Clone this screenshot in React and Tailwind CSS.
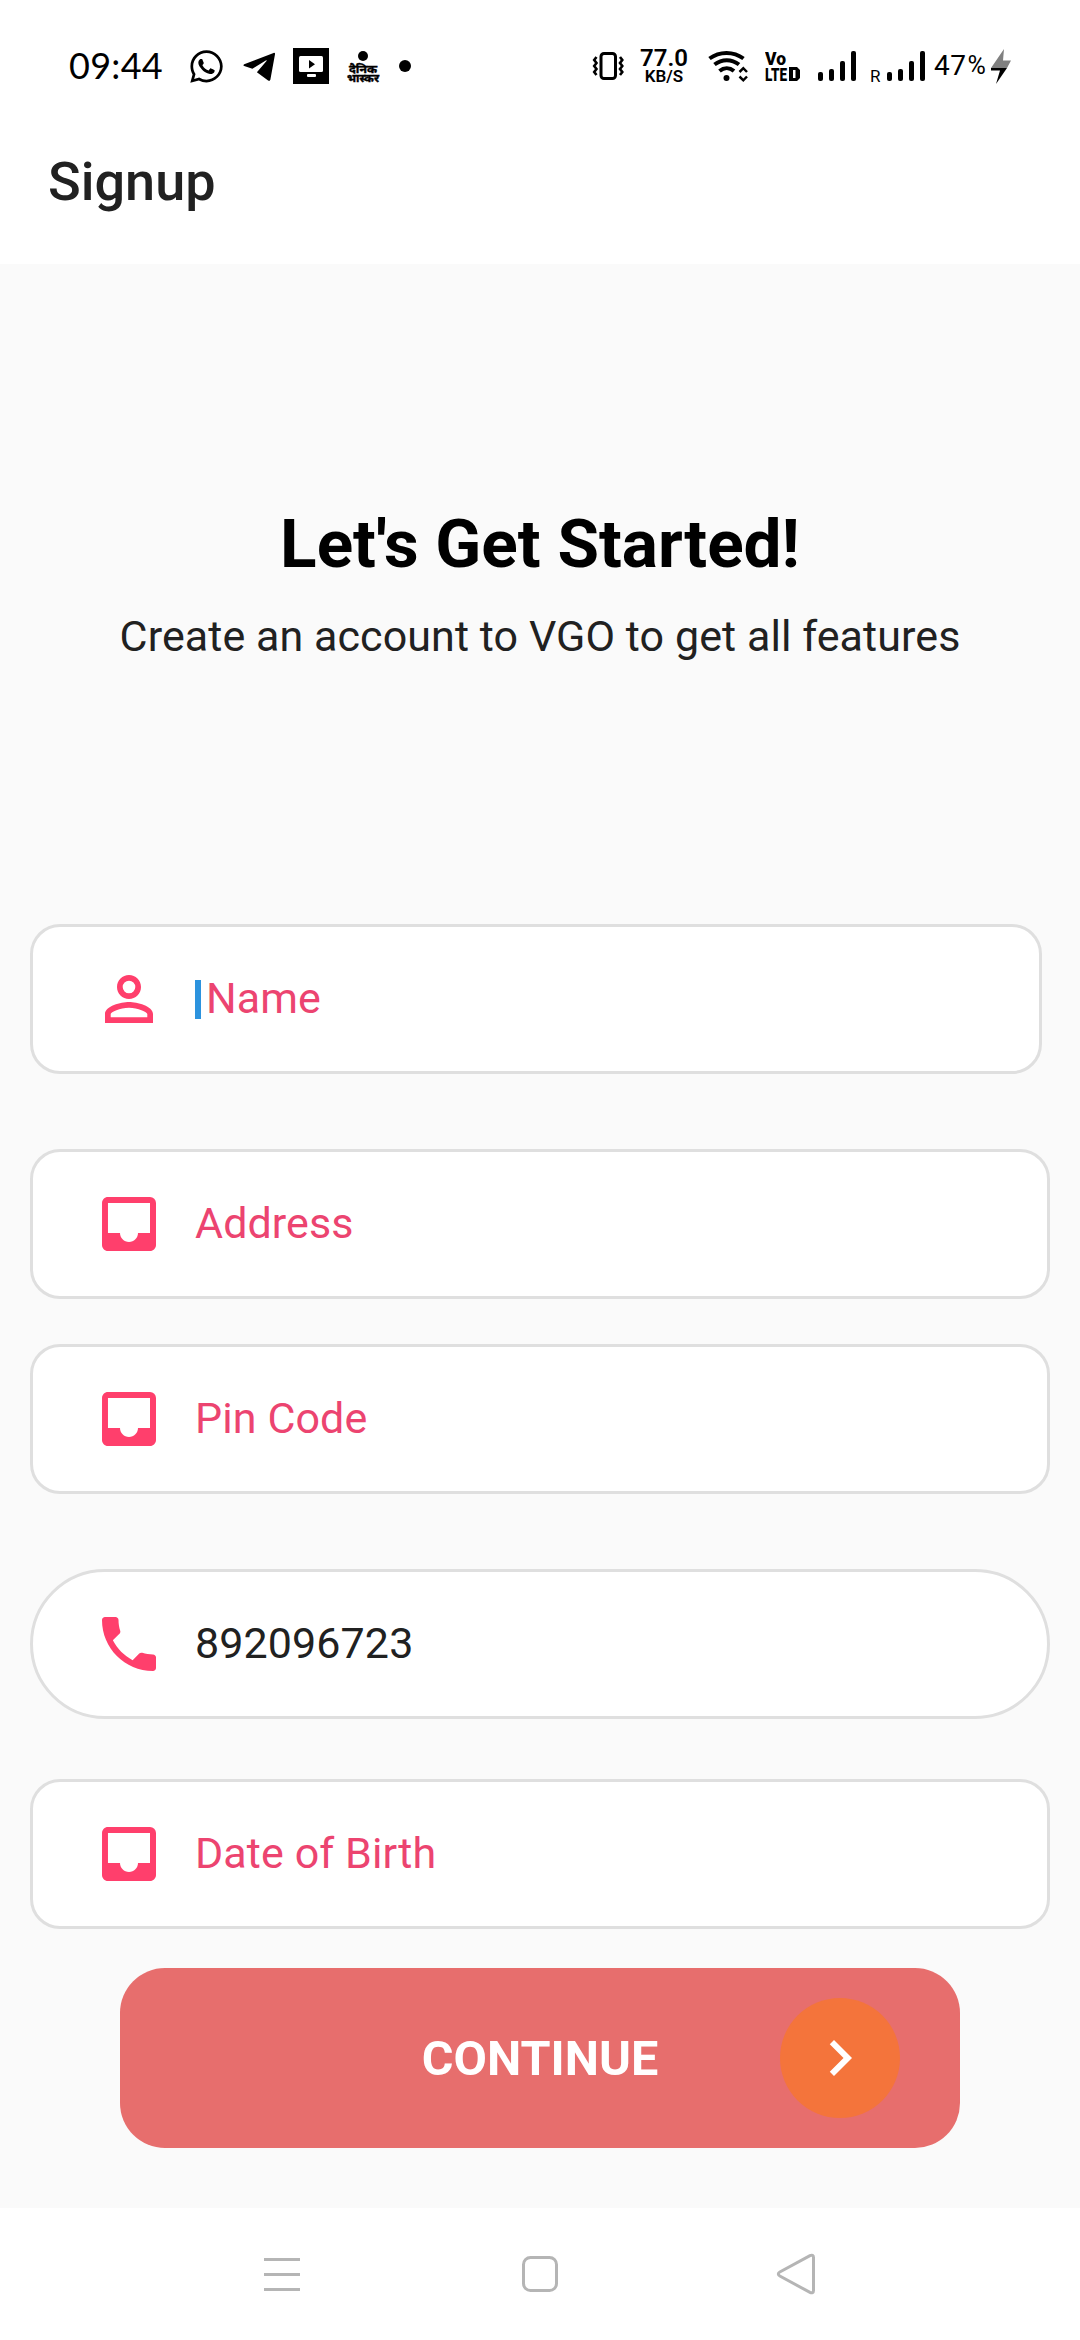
import React, { useState } from 'react';
import { FaWhatsapp } from 'react-icons/fa';
import { MdChevronRight, MdInbox, MdPersonOutline, MdPhone } from 'react-icons/md';

const SignalBars = ({ className }) => (
  <svg className={className} width="38" height="40" viewBox="0 0 38 40">
    <rect x="0" y="26" width="5" height="9" rx="2" />
    <rect x="11" y="23" width="5" height="12" rx="2" />
    <rect x="22" y="15" width="5" height="20" rx="2" />
    <rect x="33" y="5" width="5" height="30" rx="2" />
  </svg>
);

const StatusBar = () => (
  <div className="flex h-[132px] items-center pl-[69px] text-black">
    <span className="mb-[2px] w-[121px] font-[Lato,sans-serif] text-[36px] leading-10 tracking-[0.3px]">09:44</span>
    <FaWhatsapp className="h-[37px] w-[33px]" />

    {/* Telegram */}
    <svg className="ml-5" width="32" height="40" viewBox="0 0 32 40">
      <path d="M1.2 18.3 30.6 6.9c1-.4 1.7.2 1.4 1.4l-4.6 25.2c-.3 1.4-1.2 1.7-2.3.9l-11.2-8.1 9.6-11.3c.4-.6-.1-.9-.7-.5L9.4 22.7 1.2 20.1c-1-.4-1-1.3 0-1.8z" />
    </svg>

    {/* Video app */}
    <svg className="ml-[18px]" width="36" height="36" viewBox="0 0 36 36">
      <rect width="36" height="36" />
      <rect x="6" y="8" width="24" height="16" rx="1.5" fill="#fff" />
      <path d="M16 12v8.5l6-4.25z" />
      <rect x="14" y="26" width="9" height="3" rx="1" fill="#fff" />
    </svg>

    {/* News app */}
    <svg className="ml-[17px]" width="34" height="40" viewBox="0 0 34 40" fontSize="10.5" fontWeight="700" fontFamily="Noto Sans, sans-serif">
      <circle cx="17" cy="10" r="5" />
      <g stroke="#000" strokeWidth="0.4">
        <text x="3" y="26.5" textLength="28" lengthAdjust="spacingAndGlyphs">दैनिक</text>
        <text x="1" y="36" textLength="32" lengthAdjust="spacingAndGlyphs">भास्कर</text>
      </g>
    </svg>
    <span className="ml-[19px] size-3 rounded-full bg-black" />

    {/* Vibrate */}
    <svg className="ml-[181px]" width="32" height="40" viewBox="0 0 32 40" fill="none" stroke="#000">
      <rect x="9" y="7.5" width="14.5" height="25" rx="3" strokeWidth="3" />
      <path d="M4.5 11 2.2 14l2.3 3-2.3 3 2.3 3-2.3 3 2.3 3M28 11l2.3 3-2.3 3 2.3 3-2.3 3 2.3 3-2.3 3" strokeWidth="2.6" />
    </svg>

    <div className="ml-4 flex w-[48px] flex-col items-center font-semibold">
      <span className="text-[24px] leading-[20px]">77.0</span>
      <span className="text-[17px] leading-[16px]">KB/S</span>
    </div>

    {/* Wifi */}
    <svg className="ml-[20px]" width="40" height="40" viewBox="0 0 40 40" fill="none" stroke="#000">
      <path d="M1.5 12.5c10-7.5 24-7.5 34 0" strokeWidth="4" />
      <path d="M6.5 18.5c7.5-5.8 17-5.8 24.5 0" strokeWidth="4" />
      <path d="M11.5 25c4.5-3.8 10-3.8 14.5 0" strokeWidth="4" />
      <circle cx="18.5" cy="32" r="3" fill="#000" stroke="none" />
      <path d="M31.5 26l3.8-3.8L39 26M31.5 30.5l3.8 3.8L39 30.5" strokeWidth="2.5" />
    </svg>

    {/* VoLTE */}
    <svg className="ml-[17px]" width="35" height="40" viewBox="0 0 35 40" fontFamily="Roboto, sans-serif" fontWeight="900">
      <text x="0" y="19" fontSize="18.5" textLength="21" lengthAdjust="spacingAndGlyphs">Vo</text>
      <text x="0" y="35" fontSize="19" textLength="22" lengthAdjust="spacingAndGlyphs">LTE</text>
      <path d="M24 21h8l3 3v8l-3 3h-8zM28 24v8h2.5v-8z" fillRule="evenodd" />
    </svg>

    <SignalBars className="ml-[18px]" />
    <span className="ml-[14px] mt-[19px] w-[17px] text-[17px] leading-5">R</span>
    <SignalBars />
    <span className="ml-[9px] text-[28px] leading-10 tracking-[0.5px]">47</span>
    <span className="ml-[1px] text-[25px] leading-10">%</span>

    {/* Charging bolt */}
    <svg className="ml-[5px]" width="20" height="40" viewBox="0 0 20 40">
      <path d="M13 3 0 22h16l4-7.5h-8z" fill="#808080" />
      <path d="M0 22h16L5 38l4-13.5H0z" />
    </svg>
  </div>
);

const Field = ({ icon: Icon, label, value, focused, className }) => (
  <label className={`flex h-[150px] items-center border-[3px] border-[#dfdfdf] bg-white pl-[60px] ${className}`}>
    <Icon className="size-[72px] text-[#ff3f6c]" />
    <span className="ml-[30px] flex items-center text-[43px] leading-[50px] tracking-[0.1px]">
      {focused && <span className="mr-[5px] h-[39px] w-[6px] bg-[#2c93de]" />}
      <span className={value ? 'pb-[2px] text-[#212121]' : 'pb-[2px] text-[#ec4470]'}>{value || label}</span>
    </span>
  </label>
);

const App = () => {
  const [phone] = useState('892096723');

  return (
    <div className="flex h-[2340px] w-[1080px] flex-col overflow-hidden bg-white font-[Roboto,sans-serif]">
      <StatusBar />
      <header className="h-[132px] pl-12 pt-[18px]">
        <h1 className="text-[54px] font-medium leading-[64px] text-[#212121]">Signup</h1>
      </header>

      <main className="h-[1944px] bg-[#fafafa]">
        <div className="flex h-[660px] flex-col items-center pt-[241px]">
          <h2 className="text-[67.5px] font-bold leading-[78px] text-black">Let's Get Started!</h2>
          <p className="mt-[28px] text-[43px] leading-[50px] tracking-[0.08px] text-[#212121]">
            Create an account to VGO to get all features
          </p>
        </div>

        <form className="flex flex-col px-[30px]">
          <Field icon={MdPersonOutline} label="Name" focused className="w-[1012px] rounded-[30px]" />
          <Field icon={MdInbox} label="Address" className="mt-[75px] rounded-[30px]" />
          <Field icon={MdInbox} label="Pin Code" className="mt-[45px] rounded-[30px]" />
          <Field icon={MdPhone} label="Phone" value={phone} className="mt-[75px] rounded-[75px]" />
          <Field icon={MdInbox} label="Date of Birth" className="mt-[60px] rounded-[30px]" />

          <button type="button" className="mx-[90px] mt-[39px] grid h-[180px] grid-cols-[1fr_auto_1fr] items-center rounded-[45px] bg-[#e76e6d] text-white">
            <span />
            <span className="pt-[2px] text-[48.5px] font-bold leading-[56px]">CONTINUE</span>
            <span className="mr-[60px] flex size-[120px] items-center justify-center justify-self-end rounded-full bg-[#f4743b]">
              <MdChevronRight className="size-[72px]" />
            </span>
          </button>
        </form>
      </main>

      <nav className="flex h-[132px] items-center justify-between pl-[262px] pr-[264px]">
        <svg width="40" height="44" viewBox="0 0 40 44" stroke="#b5b5b5" strokeWidth="3">
          <path d="M2 7.5h36M2 22.5h36M2 37.5h36" />
        </svg>
        <svg width="40" height="44" viewBox="0 0 40 44" fill="none" stroke="#b5b5b5" strokeWidth="3">
          <rect x="4.5" y="5.5" width="33" height="33" rx="7" />
        </svg>
        <svg width="40" height="44" viewBox="0 0 40 44" fill="none" stroke="#b5b5b5" strokeWidth="3">
          <path d="M3.8 20 34 3.6c2-1 3.5-.2 3.5 2v32.800c0 2.200-1.500 3-3.500 2L3.800 24c-2-1.100-2-2.900 0-4z" />
        </svg>
      </nav>
    </div>
  );
};

export default App;
